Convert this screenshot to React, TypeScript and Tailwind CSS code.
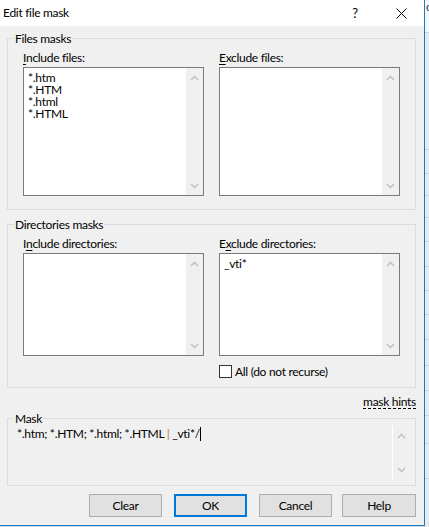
import React from "react";

function Chevron({ up }: { up?: boolean }) {
  return (
    <svg width="9" height="6" viewBox="0 0 9 6" className="block">
      <polyline
        points={up ? "1,5 4.5,1.5 8,5" : "1,1 4.5,4.5 8,1"}
        fill="none"
        stroke="#c2c2c2"
        strokeWidth="1.6"
      />
    </svg>
  );
}

function ScrollCol({ white }: { white?: boolean }) {
  return (
    <div
      className={
        white
          ? "w-[17px] bg-[#f0f0f0] border-l border-white flex flex-col justify-between items-center pt-[7px] pb-[6px]"
          : "w-[17px] bg-[#f0f0f0] flex flex-col justify-between items-center pt-[7px] pb-[6px]"
      }
    >
      <Chevron up />
      <Chevron />
    </div>
  );
}

function ListBox({ items, tall }: { items: string[]; tall?: boolean }) {
  return (
    <div
      className={
        tall
          ? "flex h-[129px] border border-[#7a7a7a] bg-white"
          : "flex h-[103px] border border-[#7a7a7a] bg-white"
      }
    >
      <div className="flex-1 pl-[4px] pt-[4px] text-[12px] leading-[12px] text-black">
        {items.map((t) => (
          <div key={t}>{t}</div>
        ))}
      </div>
      <ScrollCol />
    </div>
  );
}

function Label({ pre, u, post }: { pre: string; u: string; post: string }) {
  return (
    <div className="pt-[5px] text-[12px] leading-[14px] text-black">
      {pre}
      <span className="underline underline-offset-[2px]">{u}</span>
      {post}
    </div>
  );
}

function Button({ children, primary }: { children: React.ReactNode; primary?: boolean }) {
  return (
    <div
      className={
        primary
          ? "w-[73px] h-[23px] border-2 border-[#0078d7] bg-[#e1e1e1] flex items-center justify-center text-[12px] text-black"
          : "w-[73px] h-[23px] border border-[#adadad] bg-[#e1e1e1] flex items-center justify-center text-[12px] text-black"
      }
    >
      {children}
    </div>
  );
}

export default function App() {
  return (
    <div className="w-[429px] h-[527px] flex overflow-hidden bg-[#d9d9d9] [font-family:Lato,'Noto_Sans',sans-serif] tracking-[-0.3px] text-black">
      <div className="w-[425px] h-[526px] shrink-0 flex flex-col bg-[#f0f0f0] border-r border-b border-[#1979ca]">
        {/* Title bar */}
        <div className="h-[26px] shrink-0 bg-white flex items-center">
          <div className="pl-[3px] text-[12px] leading-[14px]">Edit file mask</div>
          <div className="flex-1" />
          <div className="w-[46px] h-[26px] flex items-center justify-center text-[13px] leading-[14px]">?</div>
          <div className="w-[46px] h-[26px] flex items-center justify-center">
            <svg width="11" height="11" viewBox="0 0 11 11">
              <path d="M0.5 0.5 L10.5 10.5 M10.5 0.5 L0.5 10.5" stroke="#000" strokeWidth="1" />
            </svg>
          </div>
        </div>

        <div className="pl-[7px] flex flex-col">
          {/* Files masks */}
          <fieldset className="mt-[5px] w-[409px] border border-[#dcdcdc]">
            <legend className="ml-[6px] px-[1px] text-[12px] leading-[15px]">Files masks</legend>
            <div className="grid grid-cols-[181px_181px] gap-x-[15px] px-[15px] pb-[13px]">
              <div>
                <Label pre="" u="I" post="nclude files:" />
                <div className="mt-[2px]">
                  <ListBox tall items={["*.htm", "*.HTM", "*.html", "*.HTML"]} />
                </div>
              </div>
              <div>
                <Label pre="" u="E" post="xclude files:" />
                <div className="mt-[2px]">
                  <ListBox tall items={[]} />
                </div>
              </div>
            </div>
          </fieldset>

          {/* Directories masks */}
          <fieldset className="mt-[7px] w-[409px] border border-[#dcdcdc]">
            <legend className="ml-[6px] px-[1px] text-[12px] leading-[15px]">Directories masks</legend>
            <div className="grid grid-cols-[181px_181px] gap-x-[15px] px-[15px] pb-[9px] items-start">
              <div>
                <Label pre="I" u="n" post="clude directories:" />
                <div className="mt-[2px]">
                  <ListBox items={[]} />
                </div>
              </div>
              <div>
                <Label pre="E" u="x" post="clude directories:" />
                <div className="mt-[2px]">
                  <ListBox items={["_vti*"]} />
                </div>
                <div className="mt-[9px] flex items-center h-[13px]">
                  <div className="w-[13px] h-[13px] border border-[#333333] bg-white" />
                  <div className="ml-[3px] text-[12px] leading-[14px]">All (do not recurse)</div>
                </div>
              </div>
            </div>
          </fieldset>

          {/* mask hints */}
          <div className="mt-[7px] w-[409px] flex justify-end">
            <span className="text-[12px] leading-[14px] underline decoration-dashed underline-offset-[2px]">
              mask hints
            </span>
          </div>

          {/* Mask */}
          <fieldset className="mt-[2px] w-[409px] border border-[#dcdcdc]">
            <legend className="ml-[6px] px-[1px] text-[12px] leading-[15px]">Mask</legend>
            <div className="pl-[8px] pr-[6px] pb-[6px]">
              <div className="h-[53px] flex">
                <div className="flex-1 pl-[1px] pt-[1px] text-[12px] leading-[14px] whitespace-nowrap">
                  *.htm; *.HTM; *.html; *.HTML <span className="text-[#a8842e]">|</span> _vti*/
                  <span className="inline-block w-[1px] h-[14px] bg-black align-[-3px]" />
                </div>
                <ScrollCol white />
              </div>
            </div>
          </fieldset>

          {/* Buttons */}
          <div className="mt-[8px] w-[409px] flex justify-end">
            <Button>Clear</Button>
            <div className="ml-[12px]">
              <Button primary>OK</Button>
            </div>
            <div className="ml-[12px]">
              <Button>Cancel</Button>
            </div>
            <div className="ml-[10px] w-[74px] h-[23px] border border-[#adadad] bg-[#e1e1e1] flex items-center justify-center text-[12px]">
              Help
            </div>
          </div>
        </div>
      </div>

      {/* Background window strip */}
      <div className="flex-1 flex flex-col overflow-hidden">
        <div className="h-[33px] bg-[#f5f5f5] border-b border-[#cfcfcf] text-[12px] leading-[14px] pl-[1px] text-[#333]">c</div>
        <div className="h-[117px] bg-[#e9e9e9] border-b border-[#cfcfcf]" />
        <div className="h-[24px] bg-[#e9e9e9] border-b border-[#cfcfcf]" />
        <div className="h-[22px] bg-[#e9e9e9] border-b border-[#cfcfcf]" />
        <div className="h-[22px] bg-[#e9e9e9] border-b border-[#cfcfcf]" />
        <div className="h-[24px] bg-[#e9e9e9] border-b border-[#cfcfcf]" />
        <div className="h-[25px] bg-[#e9e9e9] border-b border-[#cfcfcf]" />
        <div className="h-[24px] bg-[#e9e9e9] border-b border-[#cfcfcf]" />
        <div className="h-[24px] bg-[#e9e9e9] border-b border-[#cfcfcf]" />
        <div className="h-[25px] bg-[#e9e9e9] border-b border-[#cfcfcf]" />
        <div className="h-[26px] bg-[#e9e9e9] border-b border-[#cfcfcf]" />
        <div className="h-[25px] bg-[#e9e9e9] border-b border-[#cfcfcf]" />
        <div className="h-[25px] bg-[#e9e9e9] border-b border-[#cfcfcf]" />
        <div className="h-[28px] bg-[#e9e9e9] border-b border-[#cfcfcf]" />
        <div className="h-[35px] bg-[#e9e9e9] border-b border-[#cfcfcf]" />
        <div className="flex-1 bg-[#e9e9e9]" />
      </div>
    </div>
  );
}
